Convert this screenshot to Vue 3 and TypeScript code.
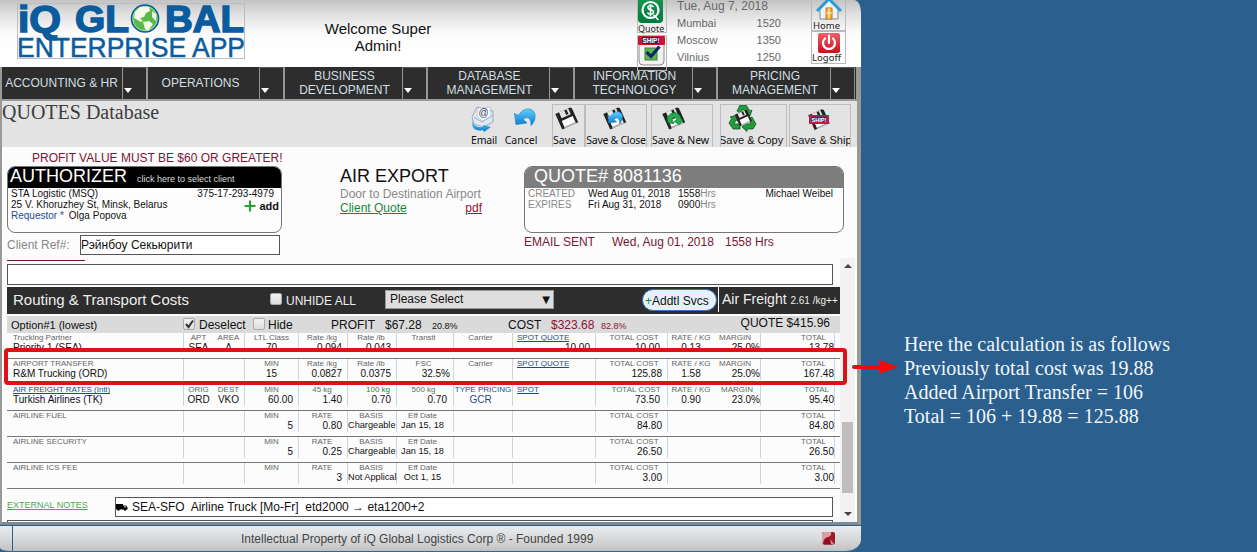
<script setup lang="ts">
interface Cell { l?: string; v?: string; k?: string }
interface Tool { name: string; icon: string; cls: string }

const menus: { lines: string[]; w: number; k?: string }[] = [
  { lines: ['ACCOUNTING & HR'], w: 120, k: 'n-first' },
  { lines: ['OPERATIONS'], w: 111, k: 'n-ops' },
  { lines: ['BUSINESS', 'DEVELOPMENT'], w: 117 },
  { lines: ['DATABASE', 'MANAGEMENT'], w: 121 },
  { lines: ['INFORMATION', 'TECHNOLOGY'], w: 117 },
  { lines: ['PRICING', 'MANAGEMENT'], w: 112 },
]

const tools: Tool[] = [
  { name: 'Email', icon: 'email', cls: 't-email' },
  { name: 'Cancel', icon: 'undo', cls: 't-cancel' },
  { name: 'Save', icon: 'disk', cls: 't-save box' },
  { name: 'Save & Close', icon: 'diskundo', cls: 't-close box' },
  { name: 'Save & New', icon: 'disknew', cls: 't-new box' },
  { name: 'Save & Copy', icon: 'copy', cls: 't-copy box' },
  { name: 'Save & Ship', icon: 'ship', cls: 't-ship box' },
]

const clocks = [['Mumbai', '1520'], ['Moscow', '1350'], ['Vilnius', '1250']]

const fee = (name: string, min: string, rate: string, basis: string, eff: string, total: string): Cell[] => [
  { l: name }, {}, {}, { l: 'MIN', v: min }, { l: 'RATE', v: rate }, { l: 'BASIS', v: basis, k: 'basis' },
  { l: 'Eff Date', v: eff, k: 'eff' }, {}, {}, { l: 'TOTAL COST', v: total, k: 'm' }, {}, {}, { l: 'TOTAL', v: total },
]

const rows: Cell[][] = [
  [
    { l: 'Trucking Partner', v: 'Priority 1 (SEA)' }, { l: 'APT', v: 'SEA' }, { l: 'AREA', v: 'A' },
    { l: 'LTL Class', v: '70', k: 'mid' }, { l: 'Rate /kg', v: '0.094' }, { l: 'Rate /lb', v: '0.043' },
    { l: 'Transit' }, { l: 'Carrier' }, { l: 'SPOT QUOTE', v: '10.00', k: 'link' },
    { l: 'TOTAL COST', v: '10.00', k: 's' }, { l: 'RATE / KG', v: '0.13' }, { l: 'MARGIN', v: '25.0%' }, { l: 'TOTAL', v: '13.78' },
  ],
  [
    { l: 'AIRPORT TRANSFER', v: 'R&M Trucking (ORD)' }, {}, {},
    { l: 'MIN', v: '15', k: 'mid' }, { l: 'Rate /kg', v: '0.0827' }, { l: 'Rate /lb', v: '0.0375' },
    { l: 'FSC', v: '32.5%' }, { l: 'Carrier' }, { l: 'SPOT QUOTE', k: 'link' },
    { l: 'TOTAL COST', v: '125.88' }, { l: 'RATE / KG', v: '1.58' }, { l: 'MARGIN', v: '25.0%' }, { l: 'TOTAL', v: '167.48' },
  ],
  [
    { l: 'AIR FREIGHT RATES (Intl)', v: 'Turkish Airlines (TK)', k: 'link' }, { l: 'ORIG', v: 'ORD' }, { l: 'DEST', v: 'VKO' },
    { l: 'MIN', v: '60.00' }, { l: '45 kg', v: '1.40' }, { l: '100 kg', v: '0.70', k: 'green' },
    { l: '500 kg', v: '0.70', k: 's' }, { l: 'TYPE PRICING', v: 'GCR', k: 'blue' }, { l: 'SPOT', k: 'link' },
    { l: 'TOTAL COST', v: '73.50', k: 's c3' }, { l: 'RATE / KG', v: '0.90' }, { l: 'MARGIN', v: '23.0%', k: 'c2' }, { l: 'TOTAL', v: '95.40', k: 'c3' },
  ],
  fee('AIRLINE FUEL', '5', '0.80', 'Chargeable', 'Jan 15, 18', '84.80'),
  fee('AIRLINE SECURITY', '5', '0.25', 'Chargeable', 'Jan 15, 18', '26.50'),
  fee('AIRLINE ICS FEE', '', '3', 'Not Applical', 'Oct 1, 15', '3.00'),
]

const notes: string[] = [
  'Here the calculation is as follows',
  'Previously total cost was 19.88',
  'Added Airport Transfer = 106',
  'Total = 106 + 19.88 = 125.88',
]
</script>

<template>
  <div class="screen">
    <svg class="defs" width="0" height="0">
      <defs>
        <linearGradient id="blueg" x1="0" y1="0" x2="0" y2="1"><stop offset="0" stop-color="#5fd2fb" /><stop offset="1" stop-color="#0c78cf" /></linearGradient>
        <linearGradient id="greeng" x1="0" y1="0" x2="0" y2="1"><stop offset="0" stop-color="#18994f" /><stop offset="1" stop-color="#007a3c" /></linearGradient>
        <linearGradient id="redg" x1="0" y1="0" x2="0" y2="1"><stop offset="0" stop-color="#f0606a" /><stop offset="1" stop-color="#c8101e" /></linearGradient>
        <g id="disk">
          <g transform="rotate(-24 14 13)">
            <path d="M5 4.500 H21 L22.500 6 V21.500 H5 Z" fill="#222" />
            <rect x="9" y="4.500" width="10" height="6.500" fill="#e4e4e4" />
            <rect x="14.500" y="5" width="2.500" height="5" fill="#222" />
            <rect x="8" y="13.500" width="12" height="8" fill="#fff" />
            <rect x="8" y="20" width="12" height="1.500" fill="#aaa" />
          </g>
        </g>
        <g id="undo"><path d="M6.500 8.500 L8 19.500 L19 18 L15.500 14.500 C18 11 23.500 12 23 20.500 C28.500 15 28.500 7 23 4.500 C18 2.500 13 6 10.500 10.500 Z" fill="url(#blueg)" stroke="#1687cc" stroke-width=".7" /></g>
      </defs>
    </svg>

    <main class="app">
      <header class="top">
        <svg class="logo" width="228" height="56" viewBox="0 0 228 56">
          <rect x=".5" y=".5" width="227" height="55" fill="none" stroke="#b9bec4" />
          <g fill="#0b5c9e" stroke="#0b5c9e" font-family="Liberation Sans, Arial, sans-serif">
            <text x="1" y="29" font-size="37" font-weight="bold" stroke-width="1.500" textLength="43" lengthAdjust="spacingAndGlyphs">iQ</text>
            <text x="58" y="29" font-size="37" font-weight="bold" stroke-width="1.500" textLength="54" lengthAdjust="spacingAndGlyphs">GL</text>
            <text x="148" y="29" font-size="37" font-weight="bold" stroke-width="1.500" textLength="79" lengthAdjust="spacingAndGlyphs">BAL</text>
            <text x="0" y="54.300" font-size="27" stroke-width=".5" textLength="228" lengthAdjust="spacingAndGlyphs">ENTERPRISE APP</text>
          </g>
          <circle cx="128" cy="15.500" r="13.500" fill="#57b947" stroke="#0b5c9e" stroke-width="1.600" />
          <circle cx="128" cy="15.500" r="12.200" fill="none" stroke="#e8f4e4" stroke-width=".6" />
          <path d="M118 9 L123 4 L132 4 L133 8 L129 10 L127 14 L123 15 L126 18 L124 19 L117 15 Z M126 19 L132 18 L136 21 L131 28 L128 26 Z M135 8 L139 11 L139 18 L135 14 Z" fill="#f4fae8" />
        </svg>
        <p class="welcome">Welcome Super<br />Admin!</p>
        <div class="quick">
          <div class="qbox qquote">
            <svg width="26" height="24" viewBox="0 0 26 24"><rect x="0" y="-5" width="25" height="28" rx="4" fill="url(#greeng)" /><circle cx="12.500" cy="10" r="8" fill="none" stroke="#fff" stroke-width="2.200" /><path d="M15.500 7 C13.500 4.500 9.500 5.500 10 8 C10.500 10.500 15.500 9 15.500 12 C15.500 15 10.500 15 9.500 12.500 M12.500 4 V16.500 M15.500 15 L20.500 20" fill="none" stroke="#fff" stroke-width="1.500" /></svg>
            <span>Quote</span>
          </div>
          <div class="qbox qship">
            <svg width="28" height="35" viewBox="0 0 28 35"><path d="M1 7 H26 V25 Q26 29 22 29 H5 Q1 29 1 25 Z" fill="#f2f2f2" stroke="#8b8b8b" /><rect x="0" y="0" width="27" height="9" rx="1" fill="#c91632" /><rect x="4" y="1" width="18" height="7" fill="#26275e" /><text x="4.500" y="7" font-size="7" font-weight="bold" fill="#fff" font-family="Liberation Sans, sans-serif" textLength="17" lengthAdjust="spacingAndGlyphs">SHIP!</text><rect x="7" y="12" width="12" height="12" fill="#62b455" stroke="#398540" /><path d="M8.500 16 L13 20.500 L21.500 10.500" fill="none" stroke="#082a66" stroke-width="3.200" /></svg>
          </div>
        </div>
        <div class="clock">
          <div class="today">Tue, Aug 7, 2018</div>
          <div v-for="c in clocks" :key="c[0]" class="zone"><span>{{ c[0] }}</span><span>{{ c[1] }}</span></div>
        </div>
        <div class="session">
          <div class="qbox qhome">
            <svg width="26" height="22" viewBox="0 0 26 22"><path d="M4 8 V19 H22 V8 L13 0 Z" fill="#eef2f7" stroke="#7e8ba0" /><path d="M1 11 L13 -1 L25 11" fill="none" stroke="#2a9ad6" stroke-width="3" /><rect x="10" y="8" width="6" height="11" fill="#f2b02c" stroke="#c07a12" /><path d="M13 8 V19 M10 13 H16" stroke="#fff" stroke-width=".8" /></svg>
            <span>Home</span>
          </div>
          <div class="qbox qoff">
            <svg width="24" height="22" viewBox="0 0 24 22"><rect x="1" y="1" width="22" height="20" rx="2" fill="url(#redg)" /><path d="M8 6.500 A6 6 0 1 0 16 6.500 M12 3.500 V11" fill="none" stroke="#fff" stroke-width="2.200" stroke-linecap="round" /></svg>
            <span>Logoff</span>
          </div>
        </div>
      </header>

      <nav class="nav">
        <template v-for="m in menus" :key="m.lines[0]">
          <div class="menu" :class="m.k" :style="{ width: m.w + 'px' }"><div><div v-for="t in m.lines" :key="t">{{ t }}</div></div></div>
          <div class="drop"><i></i></div>
        </template>
      </nav>

      <section class="toolbar">
        <h1>QUOTES Database</h1>
        <div class="tools">
          <div v-for="t in tools" :key="t.name" class="tool" :class="t.cls">
            <svg width="30" height="28" viewBox="0 0 30 28">
              <g v-if="t.icon === 'email'">
                <path d="M3 12 L8 2 L24 6 L24 17 L14 22 L5 19 Z" fill="#dfe8f1" stroke="#9babc0" />
                <path d="M9 3 L21 2 L22 12 L13 16 L8 11 Z" fill="#fafcff" stroke="#a9b5c5" stroke-width=".6" />
                <text x="9.500" y="11" font-size="10" fill="#345" font-family="Liberation Sans, sans-serif">@</text>
                <path d="M5 12 L13 17 L24 10" fill="none" stroke="#9eb0c5" />
                <path d="M4 15 C3 20 8 23 14 22 L14 20 L22 22 L15 27 L14 25 C7 27 1 23 4 15 Z" fill="url(#blueg)" />
              </g>
              <use v-if="t.icon === 'undo'" href="#undo" transform="translate(2 0)" />
              <use v-if="t.icon.startsWith('disk')" href="#disk" />
              <use v-if="t.icon === 'diskundo'" href="#undo" transform="translate(2 4) scale(.72)" />
              <path v-if="t.icon === 'disknew'" d="M7 12 L9.500 10 C13 6 20 7 21 14 L23 15 L19.500 19.500 L14 16.500 L17 15 C16 11.500 12.500 12 12 15 L14 18.500 L8 18 Z" fill="#27a94d" stroke="#0d6e2c" stroke-width=".7" />
              <g v-if="t.icon === 'copy'">
                <g fill="#279b3b" stroke="#0c5d20" stroke-width=".8">
                  <path d="M9 7 L12 1 H18 L22 7 L24 6 L22 12 L16 10 L18 9 L15 5 L12 9 Z" />
                  <path d="M24 13 L28 20 L25 25 H19 V27.500 L14 23 L19 18 V20 H23 L20 15 Z" />
                  <path d="M12 20 V25 H5 L1 19 L4 14 L2 13 L9 11 L10 17 L8 16 L6 20 Z" />
                </g>
                <use href="#disk" transform="translate(5 4) scale(.75)" />
              </g>
              <g v-if="t.icon === 'ship'">
                <use href="#disk" transform="translate(2 2) scale(.94)" />
                <rect x="5" y="10" width="20" height="9" rx="1" fill="#c51c3d" /><rect x="7" y="11.500" width="16" height="5.500" fill="#38346f" />
                <text x="7.500" y="16.500" font-size="6" font-weight="bold" fill="#fff" font-family="Liberation Sans, sans-serif" textLength="15" lengthAdjust="spacingAndGlyphs">SHIP!</text>
              </g>
            </svg>
            <span>{{ t.name }}</span>
          </div>
        </div>
      </section>

      <section class="body">
        <div class="warn">PROFIT VALUE MUST BE $60 OR GREATER!</div>
        <div class="cards">
          <div class="left">
            <div class="card auth">
              <div class="chead"><b>AUTHORIZER</b><small>click here to select client</small></div>
              <div class="cline"><span>STA Logistic (MSQ)</span><span>375-17-293-4979</span></div>
              <div class="cline">25 V. Khoruzhey St, Minsk, Belarus
                <span class="add"><svg width="12" height="12" viewBox="0 0 12 12"><path d="M6 .5 V11.500 M.5 6 H11.500" stroke="#2e9e34" stroke-width="2.200" /></svg>add</span>
              </div>
              <div class="cline req"><em>Requestor *</em>Olga Popova</div>
            </div>
            <div class="ref"><label>Client Ref#:</label><div class="field">Рэйнбоу Секьюрити</div></div>
          </div>
          <div class="mode">
            <h2>AIR EXPORT</h2>
            <div>Door to Destination Airport</div>
            <div class="links"><a class="cq">Client Quote</a><a class="pdf">pdf</a></div>
          </div>
          <div class="right">
            <div class="card quote">
              <div class="chead"><b>QUOTE# 8081136</b></div>
              <div class="qline"><i>CREATED</i><span>Wed Aug 01, 2018</span><span>1558<i>Hrs</i></span><span class="who">Michael Weibel</span></div>
              <div class="qline"><i>EXPIRES</i><span>Fri Aug 31, 2018</span><span>0900<i>Hrs</i></span></div>
            </div>
            <div class="sent"><span>EMAIL SENT</span><span>Wed, Aug 01, 2018</span><span>1558 Hrs</span></div>
          </div>
        </div>

        <div class="scroller">
          <div class="pane">
            <div class="rule"></div>
            <div class="field wide"></div>
            <div class="bar">
              <span class="title">Routing &amp; Transport Costs</span>
              <span class="chk c1"></span><span class="unhide">UNHIDE ALL</span>
              <div class="select"><span>Please Select</span><span class="tri">▼</span></div>
              <div class="pill"><i>+</i>Addtl Svcs</div>
              <div class="freight">Air Freight <small>2.61 /kg++</small></div>
            </div>
            <div class="option">
              <span class="oname">Option#1 (lowest)</span>
              <span class="chk"><svg width="11" height="11" viewBox="0 0 11 11"><path d="M2 5 L4.500 8 L9 1.500" fill="none" stroke="#333" stroke-width="2" /></svg></span><span class="des">Deselect</span>
              <span class="chk"></span><span class="hide">Hide</span>
              <span class="profit">PROFIT</span><span class="pv">$67.28</span><small>20.8%</small>
              <span class="cost">COST</span><span class="cv">$323.68</span><small class="red">82.8%</small>
              <span class="qt">QUOTE $415.96</span>
            </div>
            <div v-for="(r, i) in rows" :key="i" class="row" :class="{ first: i === 0 }">
              <div v-for="(c, j) in r" :key="j" class="cell" :class="['col' + j, c.k]">
                <div class="lab"><span>{{ c.l }}</span></div>
                <div class="val">{{ c.v }}</div>
              </div>
            </div>
            <div class="ext">
              <a>EXTERNAL NOTES</a>
              <div class="field note">
                <svg width="12" height="8" viewBox="0 0 12 8"><path d="M0 1 H7 V2.500 H10 L11.500 4.500 V6.500 H0 Z" fill="#000" /><circle cx="2.500" cy="6.500" r="1.200" /><circle cx="9" cy="6.500" r="1.200" /><rect x="8" y="3" width="2" height="1.500" fill="#99a" /></svg>
                <span>SEA-SFO&nbsp; Airline Truck [Mo-Fr]&nbsp; etd2000 → eta1200+2</span>
              </div>
            </div>
            <div class="field last"></div>
          </div>
          <div class="sb"><i class="up"></i><div class="thumb"></div><i class="down"></i></div>
        </div>
      </section>

      <footer class="foot">
        <div class="nub"></div>
        <span>Intellectual Property of iQ Global Logistics Corp ® - Founded 1999</span>
        <svg width="14" height="13" viewBox="0 0 14 13"><rect x="0" y="0" width="13" height="12.500" rx="2" fill="#a01a2c" /><path d="M0 2 Q0 0 2 0 H9 Q10 4 6 5 Q1 6 1 12 L0 11 Z" fill="#dba0a6" /><path d="M2 12.500 Q2 8 6 7.500 Q10 7 10 12.500 Z" fill="#8a0c1e" /><path d="M8 7 L12 12 H9 Z" fill="#e08a92" /></svg>
      </footer>
    </main>

    <aside class="annot"><div v-for="n in notes" :key="n">{{ n }}</div></aside>
    <div class="hl"></div>
    <svg class="arrow" width="48" height="16" viewBox="0 0 48 16"><path d="M3 8 H30" stroke="#e80c0e" stroke-width="4" stroke-linecap="round" /><path d="M28 1 L47 8 L28 15 Z" fill="#f80808" /></svg>
  </div>
</template>

<style>
body { margin: 0; overflow: hidden; background: #2a5f8e; }
</style>

<style scoped>
.screen { position: relative; display: flex; width: 1257px; height: 552px; overflow: hidden; background: #2a5f8e; font-family: "Liberation Sans", Arial, sans-serif; color: #111; white-space: nowrap; }
.screen * { box-sizing: border-box; }
.defs { position: absolute; }
svg { display: block; flex: none; }
i, em { font-style: normal; }
.app { width: 861px; height: 552px; flex: none; display: flex; flex-direction: column; }
.top { height: 67px; flex: none; display: flex; align-items: flex-start; padding-left: 17px; background: linear-gradient(#c3c3c3 0, #dedede 13px, #fafafa 32px, #fefefe 42px); border-top-right-radius: 7px 12px; }
.logo { margin-top: 3px; overflow: visible; }
.welcome { width: 120px; margin: 20px 0 0 73px; text-align: center; font-size: 15px; line-height: 17px; }
.quick { width: 30px; margin-left: 199px; position: relative; z-index: 2; }
.qbox { border: 1px solid #b9b9b9; font: 9.500px/10px "Noto Sans", sans-serif; color: #222; display: flex; flex-direction: column; align-items: center; }
.qquote { height: 33px; border-top: 0; align-items: flex-start; }
.qquote span { font-size: 9px; }
.qship { height: 36px; margin-top: 2px; }
.clock { width: 104px; margin-left: 10px; font-size: 11px; color: #686868; }
.today { font-size: 12px; line-height: 14px; height: 16px; margin-top: -1px; }
.zone { display: flex; justify-content: space-between; line-height: 17px; }
.session { width: 35px; margin-left: 30px; }
.qhome { height: 31px; border-top: 0; }
.qhome span { margin: -1px 4px 0 0; }
.qoff { height: 33px; overflow: hidden; }
.qoff span { margin: -1px 4px 0 0; }
.nav { height: 34px; flex: none; width: 861px; display: flex; background: #2d2d2d; border-left: 2px solid #999; border-right: 5px solid #999; border-bottom: 2px solid #999; }
.menu { display: flex; align-items: center; justify-content: center; text-align: center; font-size: 12px; line-height: 14px; color: #cfdfe3; flex: none; padding-left: 2px; }
.menu.n-first { padding: 0 1px 0 0; }
.menu.n-ops { padding: 0 6px 0 0; }
.drop { width: 26px; flex: none; border: 1px solid #969696; border-right-width: 2px; border-top-color: #555; border-bottom: 0; }
.drop i { display: block; margin: 20px 0 0 1px; width: 0; border: 4.500px solid transparent; border-top: 5px solid #fff; border-bottom: 0; }
.drop:last-child { border-right: 1px solid #888; width: 25px; }
.toolbar { height: 46px; flex: none; display: flex; background: #e3e3e3; border-left: 2px solid #999; border-right: 4px solid #999; }
h1 { margin: 0; font: 20px/23px "Liberation Serif", "Times New Roman", serif; color: #3d3d3d; width: 468px; }
.tools { display: flex; padding-top: 3px; }
.tool { display: flex; flex-direction: column; align-items: center; height: 43px; font: 10.500px/14px "Noto Sans", sans-serif; color: #111; flex: none; }
.box { border: 1px solid #bdbdbd; border-bottom: 0; overflow: hidden; }
.t-email { width: 28px; padding-top: 1px; }
.t-email span { letter-spacing: -.2px; }
.t-cancel { width: 34px; margin-left: 6px; padding-top: 1px; }
.t-save { width: 33px; margin-left: 14px; align-items: flex-start; }
.t-close { width: 62px; letter-spacing: -.28px; }
.t-new { width: 62px; margin-left: 4px; letter-spacing: -.1px; align-items: flex-start; }
.t-new svg { margin-left: 8px; }
.t-copy { width: 67px; margin-left: 7px; font-family: "Liberation Sans", sans-serif; font-size: 11px; align-items: flex-start; }
.t-copy svg { margin-left: 7px; margin-top: -1px; }
.t-copy span { margin-left: -2px; margin-top: 1px; }
.t-ship { width: 62px; margin-left: 2px; font-family: "Liberation Sans", sans-serif; font-size: 11px; align-items: flex-start; }
.t-ship svg { margin-left: 14px; }
.t-ship span { margin-left: 1px; }
.body { height: 378px; flex: none; display: flex; flex-direction: column; background: #fcfcfc; border-left: 2px solid #999; border-right: 4px solid #999; border-bottom: 3px solid #7f8b94; }
.warn { margin: 4px 0 0 30px; height: 15px; font-size: 12px; line-height: 14px; color: #7b1636; }
.cards { display: flex; height: 92px; padding-left: 5px; }
.left { width: 275px; }
.card { height: 67px; border: 1px solid #777; border-radius: 8px; overflow: hidden; font-size: 10px; line-height: 11px; background: #fdfdfd; }
.chead { height: 21px; display: flex; align-items: flex-start; color: #fff; line-height: 19px; }
.chead b { font-weight: normal; font-size: 18px; }
.auth .chead { background: #000; padding-left: 2px; }
.chead small { font-size: 9px; line-height: 24px; margin-left: 10px; color: #ddd; }
.cline { display: flex; justify-content: space-between; padding: 0 7px 0 3px; height: 11px; }
.add { display: flex; align-items: center; gap: 3px; font-weight: bold; font-size: 11px; margin: 3px -5px 0 0; }
.cline.req { justify-content: flex-start; gap: 5px; }
.req em { color: #1e4b8f; }
.ref { display: flex; align-items: center; margin-top: 2px; height: 20px; }
.ref label { width: 73px; font-size: 12px; color: #888; }
.field { border: 1px solid #555; background: #fff; }
.ref .field { width: 200px; height: 20px; font-size: 12px; line-height: 18px; }
.mode { margin-left: 58px; width: 142px; font-size: 12px; line-height: 14px; color: #888; }
h2 { margin: 0 0 1px; font-size: 18px; line-height: 20px; font-weight: normal; color: #111; }
.links { display: flex; justify-content: space-between; }
a { text-decoration: underline; }
.cq { color: #17843c; }
.pdf { color: #8d1237; }
.right { margin-left: 42px; width: 320px; }
.quote .chead { background: #7d7d7d; padding-left: 9px; }
.qline { display: grid; grid-template-columns: 60px 90px 50px 1fr; padding: 0 10px 0 3px; height: 11px; }
.qline i { color: #888; }
.who { text-align: right; }
.sent { margin-top: 2px; font-size: 12px; line-height: 14px; color: #7b1636; display: grid; grid-template-columns: 88px 113px 60px; }
.scroller { flex: 1; display: flex; min-height: 0; }
.pane { width: 833px; margin-left: 5px; display: flex; flex-direction: column; overflow: hidden; }
.rule { height: 1px; width: 78px; margin: 2px 0 3px; background: #7b1636; flex: none; }
.wide { width: 826px; height: 21px; flex: none; }
.bar { height: 27px; margin-top: 2px; flex: none; background: #2d2d2d; color: #eee; display: flex; align-items: flex-start; padding: 0 1px 0 6px; font-size: 12px; line-height: 28px; }
.title { width: 257px; font-size: 15px; line-height: 26px; flex: none; }
.chk { width: 12px; height: 12px; flex: none; border: 1px solid #aaa; border-radius: 2px; background: linear-gradient(#f3f3f3, #ddd); }
.c1 { margin-top: 6px; }
.unhide { width: 99px; margin-left: 4px; flex: none; line-height: 29px; }
.select { display: flex; justify-content: space-between; width: 169px; height: 19px; margin-top: 3px; flex: none; border: 1px solid #999; background: #dedede; color: #111; line-height: 17px; padding: 0 3px 0 4px; }
.tri { font: 10px/17px "DejaVu Sans", sans-serif; }
.pill { width: 75px; height: 22px; margin: 2px 0 0 88px; border: 1px solid #3a70bd; border-radius: 11px; background: #e6f0fc; color: #111; padding-left: 2px; line-height: 22px; flex: none; }
.pill i { color: #1d8a32; }
.freight { margin-left: 1px; height: 25px; border-left: 1px solid #fff; padding-left: 3px; font-size: 14px; line-height: 25px; flex: none; }
.freight small { font-size: 10px; }
.option { height: 17px; margin-top: 2px; flex: none; background: #dadada; display: flex; align-items: flex-start; font-size: 12px; line-height: 18px; }
.option .chk { margin-top: 2px; }
.option > span, .option > small { flex: none; }
.oname { width: 172px; padding-left: 4px; font-size: 11px; }
.oname + .chk { margin-left: 4px; }
.des { width: 58px; padding-left: 4px; }
.option .hide { width: 63px; padding-left: 3px; line-height: 19px; }
.option .profit { margin-left: 3px; width: 54px; padding-left: 0; }
.option small { width: 29px; font-size: 9px; line-height: 20px; }
.pv { width: 47px; }
.cost { width: 43px; margin-left: 47px; }
.cv { width: 50px; }
.red, .cv { color: #8d1237; }
.qt { margin-left: auto; margin-right: 10px; line-height: 15px; }
.row { display: flex; height: 26px; flex: none; border-top: 1px solid #777; }
.row.first { height: 25px; border: 0; }
.first .cell { height: 15px; overflow: hidden; }
.row:nth-last-child(3) { height: 27px; border-bottom: 1px solid #777; }
.cell { height: 21px; flex: none; border-right: 1px solid #c6d6e2; }
.lab { height: 9px; font-size: 8px; line-height: 9px; color: #666; text-align: center; }
.val { font-size: 10px; line-height: 11px; text-align: right; padding-right: 5px; }
.col0 { width: 177px; padding-left: 6px; }
.col0 .lab, .col0 .val { text-align: left; }
.col1 { width: 29px; border: 0; }
.col2 { width: 32px; }
.col1 .val, .col2 .val, .mid .val, .eff .val { text-align: center; padding: 0; }
.col3 { width: 54px; }
.col4 { width: 49px; }
.col5 { width: 49px; }
.col4 .lab, .col5 .lab { padding-right: 2px; }
.green .lab { padding: 0 0 0 12px; color: #17843c; }
.basis .val { font-size: 9.200px; padding: 0; text-align: left; }
.eff.cell .lab { padding-right: 5px; }
.eff.cell .val { font-size: 9.200px; padding-right: 5px; }
.col6 { width: 57px; }
.col6 .lab { padding-right: 3px; }
.col6 .val { padding-right: 3px; }
.col6.s .val { padding-right: 6px; }
.col7 { width: 59px; }
.col7 .lab { padding-right: 5px; }
.col7 .val { text-align: center; padding-right: 5px; }
.blue .lab, .blue .val { color: #1e4b8f; }
.blue .lab { padding: 0; }
.col8 { width: 83px; }
.col8 .lab { text-align: left; padding-left: 4px; }
.link .lab { color: #1e4b8f; }
.link .lab span { border-bottom: 1px solid #1e4b8f; display: inline-block; height: 9px; }
.col9 { width: 72px; }
.col9 .lab { padding-left: 5px; }
.col9.s .val { padding-right: 7px; }
.col9.c3 .lab { padding-left: 9px; }
.col10 { width: 46px; border: 0; }
.col10 .val { text-align: center; padding: 0; }
.col11 { width: 47px; }
.col11 .lab { text-align: left; padding-left: 5px; }
.col11.c2 .lab { padding-left: 7px; }
.col11 .val { padding: 0; }
.col12 { width: 74px; }
.col12 .lab { text-align: right; padding-right: 8px; }
.col12.c3 .lab { padding-right: 5px; }
.col12 .val { padding: 0; }
.ext { display: flex; margin-top: 8px; height: 20px; flex: none; }
.ext a { width: 108px; font-size: 9px; line-height: 16px; color: #4bab4b; }
.note { width: 718px; height: 20px; display: flex; align-items: center; font-size: 12px; }
.note span { margin-left: 4px; }
.last { margin-top: 3px; width: 826px; height: 20px; flex: none; }
.sb { width: 15px; background: #f2f2f2; display: flex; flex-direction: column; align-items: center; }
.up, .down { border: 4px solid transparent; width: 0; flex: none; }
.up { border-top: 0; border-bottom: 4px solid #444; margin-top: 6px; }
.thumb { width: 11px; height: 71px; margin-top: 154px; background: #bebebe; flex: none; }
.down { border-bottom: 0; border-top: 4px solid #444; margin-top: 19px; }
.foot { height: 27px; flex: none; display: flex; align-items: center; border-top: 1px solid #2f5f87; border-bottom: 1px solid #3a6488; border-bottom-right-radius: 16px 12px; border-bottom-left-radius: 10px 4px; background: linear-gradient(#e9ecee, #d9dadb 50%, #bfc1c2); color: #444; font-size: 12px; }
.nub { width: 13px; height: 25px; border-right: 1px solid #2f5f87; }
.foot span { margin-left: 228px; width: 581px; }
.annot { margin: 332px 0 0 43px; font: 20px/24px "Liberation Serif", "Times New Roman", serif; color: #f2f6fa; }
.hl { position: absolute; left: 4px; top: 348px; width: 843px; height: 37px; border: 4px solid #e01114; border-radius: 4px; }
.arrow { position: absolute; left: 851px; top: 359px; }
</style>
